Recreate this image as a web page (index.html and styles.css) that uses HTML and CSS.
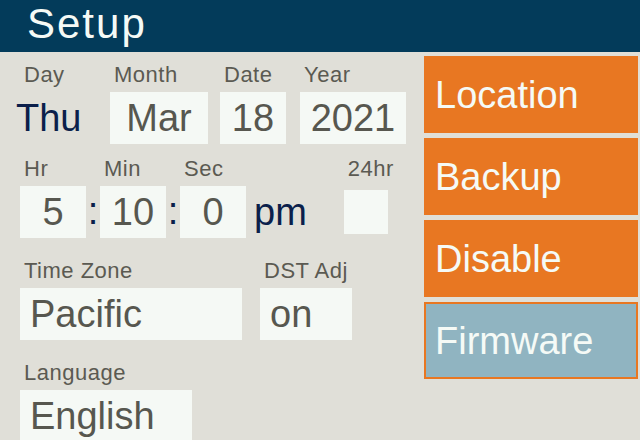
FILE: index.html
```html
<!DOCTYPE html>
<html lang="en">
<head>
    <meta charset="UTF-8">
    <meta name="viewport" content="width=device-width, initial-scale=1.0">
    <title>Setup</title>
    <link rel="stylesheet" href="styles.css">
</head>
<body>

    <div class="header">Setup</div>

    <div class="main">
        <div class="panel">

            <!-- date row -->
            <div class="row">
                <div class="field day">
                    <span class="label">Day</span>
                    <span class="value plain navy">Thu</span>
                </div>
                <div class="field w-month">
                    <span class="label">Month</span>
                    <span class="value center">Mar</span>
                </div>
                <div class="field w-date">
                    <span class="label">Date</span>
                    <span class="value center">18</span>
                </div>
                <div class="field w-year">
                    <span class="label">Year</span>
                    <span class="value center">2021</span>
                </div>
            </div>

            <!-- time row -->
            <div class="row time-row">
                <div class="field w-num">
                    <span class="label">Hr</span>
                    <span class="value center">5</span>
                </div>
                <span class="colon">:</span>
                <div class="field w-num">
                    <span class="label">Min</span>
                    <span class="value center">10</span>
                </div>
                <span class="colon">:</span>
                <div class="field w-num">
                    <span class="label">Sec</span>
                    <span class="value center">0</span>
                </div>
                <span class="ampm navy">pm</span>
                <div class="field check-field">
                    <span class="label">24hr</span>
                    <span class="checkbox"></span>
                </div>
            </div>

            <div class="row spaced">
                <div class="field w-zone">
                    <span class="label">Time Zone</span>
                    <span class="value">Pacific</span>
                </div>
                <div class="field w-dst">
                    <span class="label">DST Adj</span>
                    <span class="value">on</span>
                </div>
            </div>

            <div class="row spaced">
                <div class="field w-lang">
                    <span class="label">Language</span>
                    <span class="value">English</span>
                </div>
            </div>

        </div>

        <div class="menu">
            <button class="menu-btn">Location</button>
            <button class="menu-btn">Backup</button>
            <button class="menu-btn">Disable</button>
            <button class="menu-btn selected">Firmware</button>
        </div>
    </div>

</body>
</html>
```

FILE: styles.css
```css
html, body {
    margin: 0;
    width: 640px;
    height: 440px;
    overflow: hidden;
}

body {
    font-family: "Liberation Sans", Arial, sans-serif;
    background-color: #e0dfd8;
    color: #57574f;
}

.header {
    height: 52px;
    line-height: 47px;
    padding-left: 27px;
    background-color: #033b5a;
    color: #f5faf6;
    font-size: 42px;
    letter-spacing: 2px;
}

.main {
    display: flex;
}

.panel {
    flex: 1;
    padding: 11px 0 0 20px;
}

.row {
    display: flex;
    align-items: flex-start;
}

.time-row {
    margin-top: 13px;
}

.spaced {
    margin-top: 21px;
}

.field {
    display: flex;
    flex-direction: column;
}

.label {
    height: 24px;
    line-height: 24px;
    margin-bottom: 5px;
    padding-left: 4px;
    font-size: 22px;
    letter-spacing: 0.5px;
    color: #5b5a52;
    white-space: nowrap;
}

.value {
    height: 52px;
    line-height: 52px;
    padding: 0 10px;
    background-color: #f5f9f5;
    font-size: 38px;
    white-space: nowrap;
}

.value.center {
    padding: 0;
    text-align: center;
}

.value.plain {
    background: none;
    padding: 0;
    margin-left: -4px;
}

.navy {
    color: #0b1f4b;
}

.day { width: 90px; }
.w-month { width: 98px; margin-right: 12px; }
.w-date { width: 66px; margin-right: 14px; }
.w-year { width: 106px; }

.w-num { width: 66px; }

.colon {
    width: 14px;
    margin-top: 29px;
    height: 52px;
    line-height: 50px;
    font-size: 38px;
    text-align: center;
    color: #0b1f4b;
}

.ampm {
    margin: 29px 0 0 8px;
    height: 52px;
    line-height: 52px;
    font-size: 38px;
}

.check-field {
    margin-left: 37px;
}

.checkbox {
    width: 44px;
    height: 44px;
    margin-top: 4px;
    background-color: #f5f9f5;
}

.w-zone { width: 222px; margin-right: 18px; }
.w-dst { width: 92px; }
.w-lang { width: 172px; }

.menu {
    width: 214px;
    margin: 4px 2px 0 0;
    display: flex;
    flex-direction: column;
    gap: 5px;
}

.menu-btn {
    height: 77px;
    padding: 2px 0 0 11px;
    border: none;
    background-color: #e87722;
    color: #f5faf6;
    font-family: "Liberation Sans", Arial, sans-serif;
    font-size: 38px;
    text-align: left;
}

.menu-btn.selected {
    border: 2px solid #e87722;
    padding-left: 9px;
    background-color: #90b4c1;
}
```
